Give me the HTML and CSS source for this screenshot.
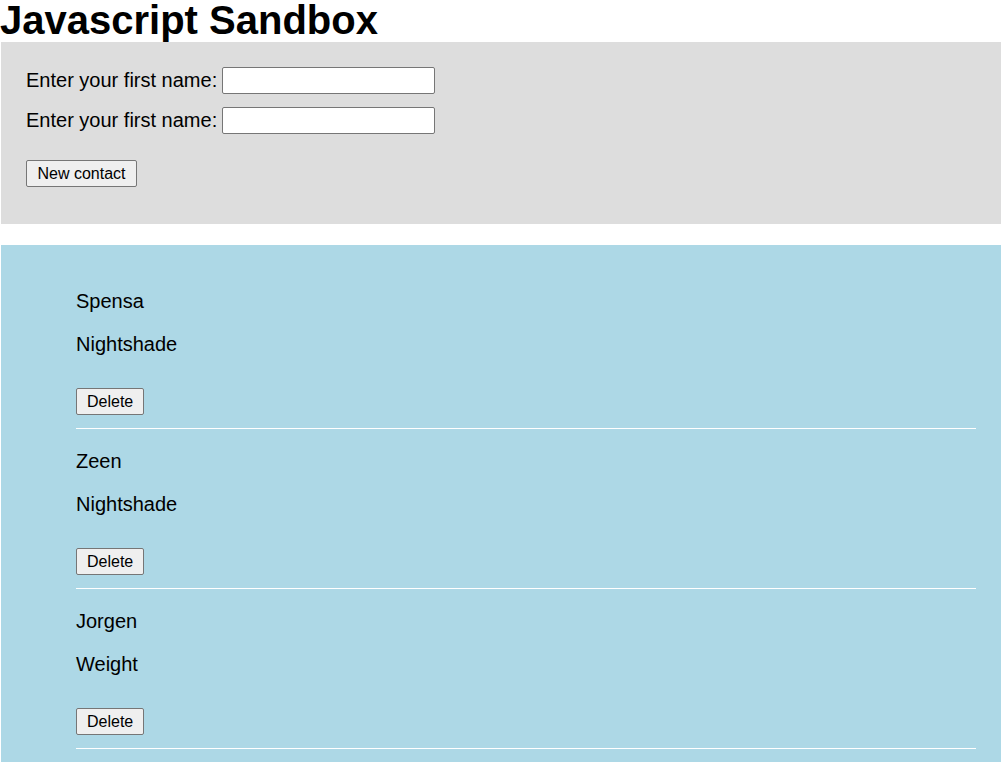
FILE: index.html
```html
<!DOCTYPE html>
<html lang="en">
<head>
<meta charset="utf-8">
<title>Javascript Sandbox</title>
<link rel="stylesheet" href="styles.css">
</head>
<body>
<h1 class="title">Javascript Sandbox</h1>
<form class="form-panel">
  <div class="field">
    <label class="field-label" for="first">Enter your first name:</label>
    <input class="field-input" id="first" type="text">
  </div>
  <div class="field">
    <label class="field-label" for="last">Enter your first name:</label>
    <input class="field-input" id="last" type="text">
  </div>
  <button class="btn btn-new" type="button">New contact</button>
</form>
<ul class="contacts">
  <li class="contact">
    <p class="contact-first">Spensa</p>
    <p class="contact-last">Nightshade</p>
    <button class="btn" type="button">Delete</button>
    <hr class="contact-rule">
  </li>
  <li class="contact">
    <p class="contact-first">Zeen</p>
    <p class="contact-last">Nightshade</p>
    <button class="btn" type="button">Delete</button>
    <hr class="contact-rule">
  </li>
  <li class="contact">
    <p class="contact-first">Jorgen</p>
    <p class="contact-last">Weight</p>
    <button class="btn" type="button">Delete</button>
    <hr class="contact-rule">
  </li>
</ul>
</body>
</html>
```
FILE: styles.css
```css
html, body {
  margin: 0;
  padding: 0;
  background: #ffffff;
}
body {
  font-family: "Liberation Sans", Arial, sans-serif;
  color: #000000;
}
.title {
  margin: 0 0 2px 0;
  font-size: 40px;
  line-height: 40px;
  font-weight: bold;
}
.form-panel {
  margin: 0 0 0 1px;
  background: #dddddd;
  padding: 25px 25px 37px 25px;
}
.field {
  display: flex;
  align-items: center;
  gap: 5px;
  height: 27px;
  margin-bottom: 13px;
  font-size: 20px;
}
.field + .field {
  margin-bottom: 26px;
}
.field-label {
  line-height: 23px;
}
.field-input {
  box-sizing: border-box;
  width: 213px;
  height: 27px;
  margin: 0;
  padding: 1px 2px;
  border: 1px solid #767676;
  border-radius: 2px;
  background: #ffffff;
  font-family: "Liberation Sans", Arial, sans-serif;
  font-size: 16px;
}
.btn {
  display: block;
  box-sizing: border-box;
  height: 27px;
  margin: 0;
  padding: 3px 10px;
  border: 1px solid #767676;
  border-radius: 2px;
  background: #efefef;
  color: #000000;
  font-family: "Liberation Sans", Arial, sans-serif;
  font-size: 16px;
  line-height: 19px;
}
.btn-new {
  padding: 3px 10px 3px 10px;
  min-width: 111px;
}
.contacts {
  list-style: none;
  margin: 21px 0 0 1px;
  padding: 24px 25px 20px 75px;
  background: #add8e6;
}
.contact {
  padding-top: 21px;
}
.contact-first,
.contact-last {
  margin: 0;
  font-size: 20px;
  line-height: 23px;
}
.contact-first {
  margin-bottom: 20px;
}
.contact-last {
  margin-bottom: 32px;
}
.contact-rule {
  margin: 13px 0 0 0;
  border: 0;
  height: 1px;
  background: #ffffff;
}
```
